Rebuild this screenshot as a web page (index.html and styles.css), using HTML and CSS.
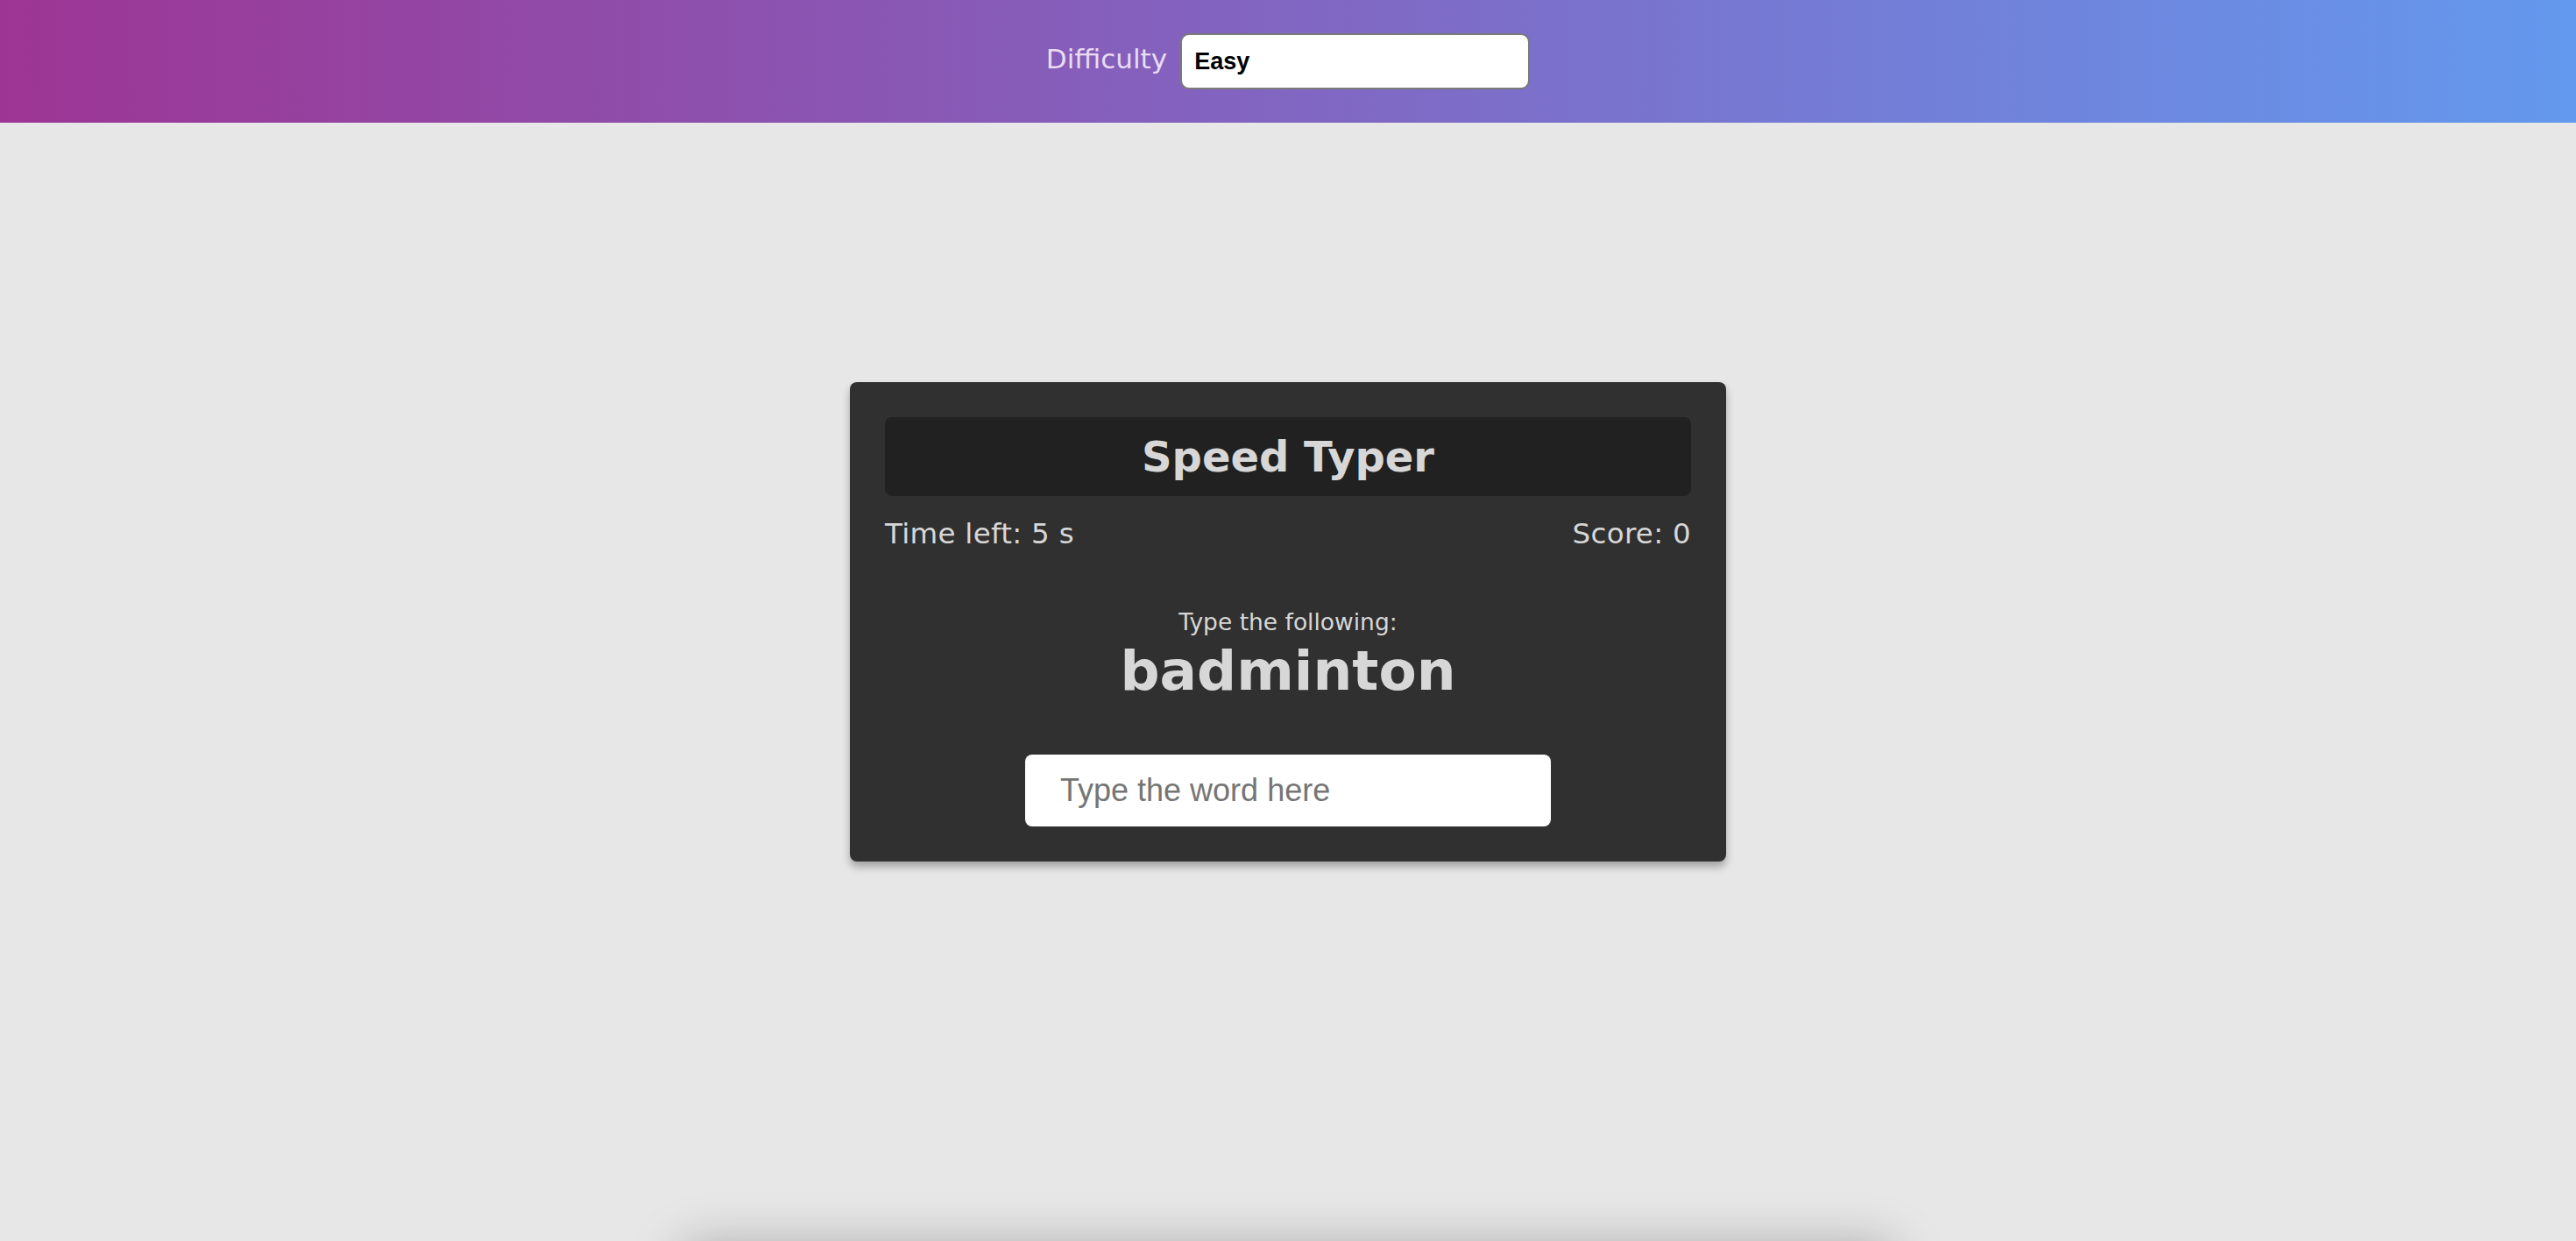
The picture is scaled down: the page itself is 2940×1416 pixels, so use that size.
FILE: index.html
```html
<!DOCTYPE html>
<html lang="en">
<head>
<meta charset="utf-8">
<title>Speed Typer</title>
<link rel="stylesheet" href="styles.css">
</head>
<body>
<div class="settings">
  <form class="settings-form">
    <label class="settings-label" for="difficulty">Difficulty</label>
    <select id="difficulty" class="difficulty-select">
      <option value="easy">Easy</option>
      <option value="medium">Medium</option>
      <option value="hard">Hard</option>
    </select>
  </form>
</div>
<main class="stage">
  <div class="container">
    <h2 class="title">Speed Typer</h2>
    <div class="stats">
      <p class="stat">Time left: <span>5 s</span></p>
      <p class="stat">Score: <span>0</span></p>
    </div>
    <p class="prompt">Type the following:</p>
    <h1 class="word">badminton</h1>
    <input type="text" class="text-input" placeholder="Type the word here" autocomplete="off">
  </div>
</main>
<div class="end-game"></div>
</body>
</html>
```
FILE: styles.css
```css
html, body {
  margin: 0;
  padding: 0;
}

body {
  background-color: #e7e7e7;
  font-family: "DejaVu Sans", Verdana, sans-serif;
  position: relative;
  overflow: hidden;
}

.settings {
  position: absolute;
  top: 0;
  left: 0;
  width: 100%;
  height: 140px;
  background: linear-gradient(to right, #9d3594 0%, #8166c2 50%, #6399ee 100%);
  display: flex;
  align-items: center;
  justify-content: center;
  z-index: 2;
}

.settings-form {
  display: flex;
  align-items: center;
  gap: 15px;
  margin-top: -2px;
}

.settings-label {
  font-size: 31px;
  color: #eadcf3;
  margin-top: -4px;
}

.difficulty-select {
  appearance: none;
  -webkit-appearance: none;
  width: 399px;
  height: 64px;
  box-sizing: border-box;
  border: 2px solid #7a7a7a;
  border-radius: 10px;
  background: #ffffff;
  padding: 0 14px;
  font-family: "Liberation Sans", Arial, sans-serif;
  font-weight: bold;
  font-size: 27px;
  color: #000;
  margin-top: 2px;
}

.stage {
  height: 100vh;
  display: flex;
  align-items: center;
  justify-content: center;
}

.container {
  width: 1000px;
  box-sizing: border-box;
  background-color: #303030;
  padding: 40px;
  border-radius: 8px;
  box-shadow: 0 6px 10px rgba(0, 0, 0, 0.3);
  color: #d7d7d7;
  text-align: center;
  display: flex;
  flex-direction: column;
  align-items: center;
  margin-top: 3px;
}

.title {
  width: 100%;
  margin: 0 0 24px;
  background-color: #212121;
  border-radius: 8px;
  padding: 16px;
  box-sizing: border-box;
  font-size: 48px;
  line-height: 58px;
  font-weight: bold;
}

.stats {
  width: 100%;
  display: flex;
  justify-content: space-between;
}

.stat {
  margin: 0;
  font-size: 32.5px;
  line-height: 38px;
  font-weight: normal;
  letter-spacing: 0.3px;
}

.prompt {
  margin: 66px 0 0;
  font-size: 26.5px;
  line-height: 32px;
}

.word {
  margin: 2px 0 0;
  font-size: 63px;
  line-height: 76px;
  font-weight: bold;
}

.text-input {
  margin-top: 57px;
  width: 600px;
  height: 82px;
  box-sizing: border-box;
  border: 0;
  border-radius: 8px;
  padding: 0 40px;
  font-family: "Liberation Sans", Arial, sans-serif;
  font-size: 36px;
  background: #fff;
  color: #222;
  outline: none;
}

.text-input::placeholder {
  color: #757575;
}

.end-game {
  width: 1380px;
  height: 400px;
  margin: 6px auto 0;
  background-color: #e7e7e7;
  box-shadow: 0 0 55px rgba(0, 0, 0, 0.28);
}
```
